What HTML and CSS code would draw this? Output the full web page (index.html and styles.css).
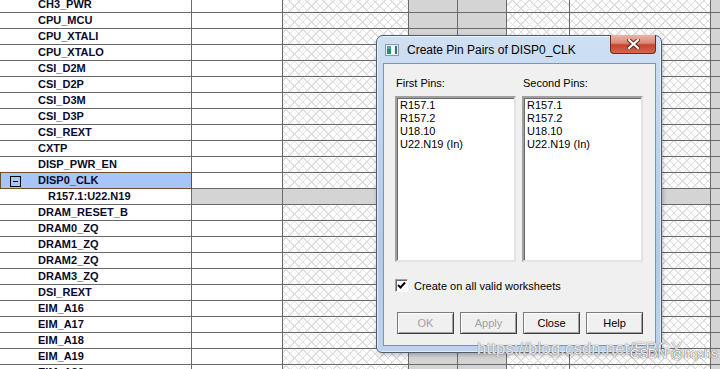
FILE: index.html
```html
<!DOCTYPE html>
<html lang="en">
<head>
    <meta charset="UTF-8">
    <title>Create Pin Pairs of DISP0_CLK</title>
    <link rel="stylesheet" href="styles.css">
</head>
<body>
    <div class="sheet">
        <div class="row"><div class="name">CH3_PWR</div><div class="c w91"></div><div class="c hatch w126"></div><div class="c grey w49"></div><div class="c grey w49"></div><div class="c hatch w63"></div><div class="c hatch w141"></div><div class="c grey end"></div></div>
        <div class="row"><div class="name">CPU_MCU</div><div class="c w91"></div><div class="c hatch w126"></div><div class="c grey w49"></div><div class="c grey w49"></div><div class="c hatch w63"></div><div class="c hatch w141"></div><div class="c grey end"></div></div>
        <div class="row"><div class="name">CPU_XTALI</div><div class="c w91"></div><div class="c hatch w126"></div><div class="c grey w49"></div><div class="c grey w49"></div><div class="c hatch w63"></div><div class="c hatch w141"></div><div class="c grey end"></div></div>
        <div class="row"><div class="name">CPU_XTALO</div><div class="c w91"></div><div class="c hatch w126"></div><div class="c grey w49"></div><div class="c grey w49"></div><div class="c hatch w63"></div><div class="c hatch w141"></div><div class="c grey end"></div></div>
        <div class="row"><div class="name">CSI_D2M</div><div class="c w91"></div><div class="c hatch w126"></div><div class="c grey w49"></div><div class="c grey w49"></div><div class="c hatch w63"></div><div class="c hatch w141"></div><div class="c grey end"></div></div>
        <div class="row"><div class="name">CSI_D2P</div><div class="c w91"></div><div class="c hatch w126"></div><div class="c grey w49"></div><div class="c grey w49"></div><div class="c hatch w63"></div><div class="c hatch w141"></div><div class="c grey end"></div></div>
        <div class="row"><div class="name">CSI_D3M</div><div class="c w91"></div><div class="c hatch w126"></div><div class="c grey w49"></div><div class="c grey w49"></div><div class="c hatch w63"></div><div class="c hatch w141"></div><div class="c grey end"></div></div>
        <div class="row"><div class="name">CSI_D3P</div><div class="c w91"></div><div class="c hatch w126"></div><div class="c grey w49"></div><div class="c grey w49"></div><div class="c hatch w63"></div><div class="c hatch w141"></div><div class="c grey end"></div></div>
        <div class="row"><div class="name">CSI_REXT</div><div class="c w91"></div><div class="c hatch w126"></div><div class="c grey w49"></div><div class="c grey w49"></div><div class="c hatch w63"></div><div class="c hatch w141"></div><div class="c grey end"></div></div>
        <div class="row"><div class="name">CXTP</div><div class="c w91"></div><div class="c hatch w126"></div><div class="c grey w49"></div><div class="c grey w49"></div><div class="c hatch w63"></div><div class="c hatch w141"></div><div class="c grey end"></div></div>
        <div class="row"><div class="name">DISP_PWR_EN</div><div class="c w91"></div><div class="c hatch w126"></div><div class="c grey w49"></div><div class="c grey w49"></div><div class="c hatch w63"></div><div class="c hatch w141"></div><div class="c grey end"></div></div>
        <div class="row sel"><div class="name"><span class="toggle"></span>DISP0_CLK</div><div class="c w91"></div><div class="c hatch w126"></div><div class="c grey w49"></div><div class="c grey w49"></div><div class="c hatch w63"></div><div class="c hatch w141"></div><div class="c grey end"></div></div>
        <div class="row sub"><div class="name">R157.1:U22.N19</div><div class="c w91"></div><div class="c w126"></div><div class="c w49"></div><div class="c w49"></div><div class="c w63"></div><div class="c w141"></div><div class="c end"></div></div>
        <div class="row"><div class="name">DRAM_RESET_B</div><div class="c w91"></div><div class="c hatch w126"></div><div class="c grey w49"></div><div class="c grey w49"></div><div class="c hatch w63"></div><div class="c hatch w141"></div><div class="c grey end"></div></div>
        <div class="row"><div class="name">DRAM0_ZQ</div><div class="c w91"></div><div class="c hatch w126"></div><div class="c grey w49"></div><div class="c grey w49"></div><div class="c hatch w63"></div><div class="c hatch w141"></div><div class="c grey end"></div></div>
        <div class="row"><div class="name">DRAM1_ZQ</div><div class="c w91"></div><div class="c hatch w126"></div><div class="c grey w49"></div><div class="c grey w49"></div><div class="c hatch w63"></div><div class="c hatch w141"></div><div class="c grey end"></div></div>
        <div class="row"><div class="name">DRAM2_ZQ</div><div class="c w91"></div><div class="c hatch w126"></div><div class="c grey w49"></div><div class="c grey w49"></div><div class="c hatch w63"></div><div class="c hatch w141"></div><div class="c grey end"></div></div>
        <div class="row"><div class="name">DRAM3_ZQ</div><div class="c w91"></div><div class="c hatch w126"></div><div class="c grey w49"></div><div class="c grey w49"></div><div class="c hatch w63"></div><div class="c hatch w141"></div><div class="c grey end"></div></div>
        <div class="row"><div class="name">DSI_REXT</div><div class="c w91"></div><div class="c hatch w126"></div><div class="c grey w49"></div><div class="c grey w49"></div><div class="c hatch w63"></div><div class="c hatch w141"></div><div class="c grey end"></div></div>
        <div class="row"><div class="name">EIM_A16</div><div class="c w91"></div><div class="c hatch w126"></div><div class="c grey w49"></div><div class="c grey w49"></div><div class="c hatch w63"></div><div class="c hatch w141"></div><div class="c grey end"></div></div>
        <div class="row"><div class="name">EIM_A17</div><div class="c w91"></div><div class="c hatch w126"></div><div class="c grey w49"></div><div class="c grey w49"></div><div class="c hatch w63"></div><div class="c hatch w141"></div><div class="c grey end"></div></div>
        <div class="row"><div class="name">EIM_A18</div><div class="c w91"></div><div class="c hatch w126"></div><div class="c grey w49"></div><div class="c grey w49"></div><div class="c hatch w63"></div><div class="c hatch w141"></div><div class="c grey end"></div></div>
        <div class="row"><div class="name">EIM_A19</div><div class="c w91"></div><div class="c hatch w126"></div><div class="c grey w49"></div><div class="c grey w49"></div><div class="c hatch w63"></div><div class="c hatch w141"></div><div class="c grey end"></div></div>
        <div class="row"><div class="name">EIM_A20</div><div class="c w91"></div><div class="c hatch w126"></div><div class="c grey w49"></div><div class="c grey w49"></div><div class="c hatch w63"></div><div class="c hatch w141"></div><div class="c grey end"></div></div>
    </div>

    <!-- dialog window -->
    <div class="dlg">
        <div class="dlg-title">
            <svg class="dlg-icon" width="14" height="12" viewBox="0 0 14 12">
                <rect x="0.5" y="0.5" width="13" height="11" fill="#e8eef4" stroke="#8c9aa8"/>
                <rect x="2" y="2" width="4" height="8" fill="#2f8a6a"/>
                <rect x="2" y="2" width="4" height="3" fill="#4aa3c9"/>
                <rect x="7" y="2" width="2" height="8" fill="#ffffff"/>
                <rect x="10" y="2" width="2" height="8" fill="#3a6f8f"/>
            </svg>
            <span class="dlg-caption">Create Pin Pairs of DISP0_CLK</span>
            <div class="dlg-close">
                <svg width="13" height="10" viewBox="0 0 13 10">
                    <path d="M2 1 L11 9 M11 1 L2 9" stroke="#5a2318" stroke-width="4" stroke-linecap="square"/>
                    <path d="M2 1 L11 9 M11 1 L2 9" stroke="#ffffff" stroke-width="2.2" stroke-linecap="square"/>
                </svg>
            </div>
        </div>
        <div class="dlg-body">
            <div class="pins">
                <div class="pin-col">
                    <div class="pin-label">First Pins:</div>
                    <div class="listbox">
                        <div>R157.1</div>
                        <div>R157.2</div>
                        <div>U18.10</div>
                        <div>U22.N19 (In)</div>
                    </div>
                </div>
                <div class="pin-col">
                    <div class="pin-label">Second Pins:</div>
                    <div class="listbox">
                        <div>R157.1</div>
                        <div>R157.2</div>
                        <div>U18.10</div>
                        <div>U22.N19 (In)</div>
                    </div>
                </div>
            </div>
            <label class="check-row">
                <span class="checkbox">
                    <svg width="9" height="9" viewBox="0 0 9 9"><path d="M1 4 L3.5 6.5 L8 1.5" fill="none" stroke="#000" stroke-width="2"/></svg>
                </span>
                Create on all valid worksheets
            </label>
            <div class="buttons">
                <button class="btn" disabled>OK</button>
                <button class="btn" disabled>Apply</button>
                <button class="btn">Close</button>
                <button class="btn">Help</button>
            </div>
        </div>
    </div>

    <div class="wm-url">https://blog.csdn.net/ERGY</div>
    <div class="wm-user">CSDN @ltqshs</div>
</body>
</html>
```

FILE: styles.css
```css
* {
    box-sizing: border-box;
}

body {
    margin: 0;
    width: 720px;
    height: 369px;
    overflow: hidden;
    background: #fff;
    position: relative;
    font-family: 'Liberation Sans', Arial, sans-serif;
}

/* spreadsheet behind the dialog */
.sheet {
    margin-top: -3px;
}

.row {
    display: flex;
    height: 16px;
    border-bottom: 1px solid #6a6a6a;
}

.name {
    position: relative;
    flex: 0 0 192px;
    padding-left: 38px;
    border-right: 1px solid #6a6a6a;
    font-size: 11px;
    font-weight: bold;
    line-height: 15px;
    color: #0a0a2c;
    white-space: nowrap;
}

.c {
    border-right: 1px solid #6a6a6a;
    background: #fff;
}

.w91 { flex: 0 0 91px; }
.w126 { flex: 0 0 126px; }
.w49 { flex: 0 0 49px; }
.w63 { flex: 0 0 63px; }
.w141 { flex: 0 0 141px; }
.end { flex: 1; border-right: none; }

.grey {
    background: #d4d4d4;
}

.hatch {
    background-color: #fff;
    background-image:
        repeating-linear-gradient(45deg, #dedede 0 1px, transparent 1px 6px),
        repeating-linear-gradient(-45deg, #dedede 0 1px, transparent 1px 6px);
}

.sel .name {
    background: #a7c4fb;
}

.sel .name::after {
    content: '';
    position: absolute;
    top: -1px;
    bottom: -1px;
    left: 0;
    right: -1px;
    border: 1px solid #6b5220;
}

.toggle {
    display: inline-block;
    vertical-align: top;
    position: relative;
    width: 11px;
    height: 11px;
    margin: 3px 17px 0 -28px;
    border: 1px solid #000;
}

.toggle::before {
    content: '';
    position: absolute;
    left: 2px;
    right: 2px;
    top: 4px;
    height: 1px;
    background: #000;
}

.sub .name {
    padding-left: 48px;
}

.sub .c {
    background: #d4d4d4;
}

/* dialog */
.dlg {
    position: absolute;
    left: 376px;
    top: 35px;
    width: 286px;
    height: 318px;
    padding: 0 5px 6px 6px;
    border: 1px solid #4e5e72;
    border-radius: 7px 7px 6px 6px;
    background: linear-gradient(180deg, #cfe0f3 0%, #bcd3ee 35%, #b3cbe8 70%, #bed4ee 100%);
    box-shadow: inset 0 0 0 1px rgba(255, 255, 255, 0.55), 1px 2px 4px rgba(0, 0, 0, 0.25);
}

.dlg-title {
    position: relative;
    height: 27px;
    display: flex;
    align-items: center;
    padding-left: 2px;
}

.dlg-icon {
    margin-right: 8px;
}

.dlg-caption {
    font-size: 12px;
    color: #000;
    padding-top: 1px;
}

.dlg-close {
    position: absolute;
    top: -1px;
    right: 0;
    width: 46px;
    height: 19px;
    border: 1px solid #6e2a1e;
    border-top: none;
    border-radius: 0 0 4px 4px;
    background: linear-gradient(180deg, #eab3a6 0%, #dc8877 45%, #c7432c 55%, #d5664c 100%);
    display: flex;
    justify-content: center;
    align-items: center;
}

.dlg-body {
    height: 283px;
    border: 1px solid #7f93ad;
    background: #f0f0f0;
    font-size: 11px;
    color: #000;
}

.pins {
    display: flex;
    gap: 6px;
    padding: 13px 0 0 11px;
}

.pin-col {
    width: 121px;
}

.pin-label {
    height: 13px;
    line-height: 13px;
    padding-left: 1px;
    margin-bottom: 6px;
}

.listbox {
    height: 166px;
    padding: 1px 3px;
    background: #fff;
    border: 2px solid;
    border-color: #a0a0a0 #e3e3e3 #e3e3e3 #a0a0a0;
    box-shadow: inset 1px 1px 0 #696969;
    line-height: 13px;
}

.check-row {
    display: flex;
    align-items: center;
    margin: 17px 0 0 11px;
    height: 13px;
}

.checkbox {
    width: 13px;
    height: 13px;
    margin-right: 6px;
    background: #fff;
    border: 1px solid;
    border-color: #a0a0a0 #fff #fff #a0a0a0;
    box-shadow: inset 1px 1px 0 #696969;
    display: flex;
    justify-content: center;
    align-items: center;
}

.buttons {
    display: flex;
    gap: 6px;
    margin: 20px 0 0 13px;
}

.btn {
    width: 57px;
    height: 22px;
    padding: 0;
    font-family: 'Liberation Sans', Arial, sans-serif;
    font-size: 11px;
    color: #000;
    background: #f0f0f0;
    border: 1px solid;
    border-color: #7a7a7a #404040 #404040 #7a7a7a;
    box-shadow: inset 1px 1px 0 #fff, inset -1px -1px 0 #a0a0a0;
}

.btn:disabled {
    color: #a0a0a0;
}

/* watermark */
.wm-url {
    position: absolute;
    left: 477px;
    top: 339px;
    font-size: 17px;
    color: rgba(255, 255, 255, 0.8);
    text-shadow: 0 0 1px #888, 0 0 1px #888;
    white-space: nowrap;
}

.wm-user {
    position: absolute;
    left: 630px;
    top: 346px;
    font-size: 13px;
    color: #fff;
    text-shadow: 0 0 1px #555, 0 0 1px #555;
    white-space: nowrap;
}
```
